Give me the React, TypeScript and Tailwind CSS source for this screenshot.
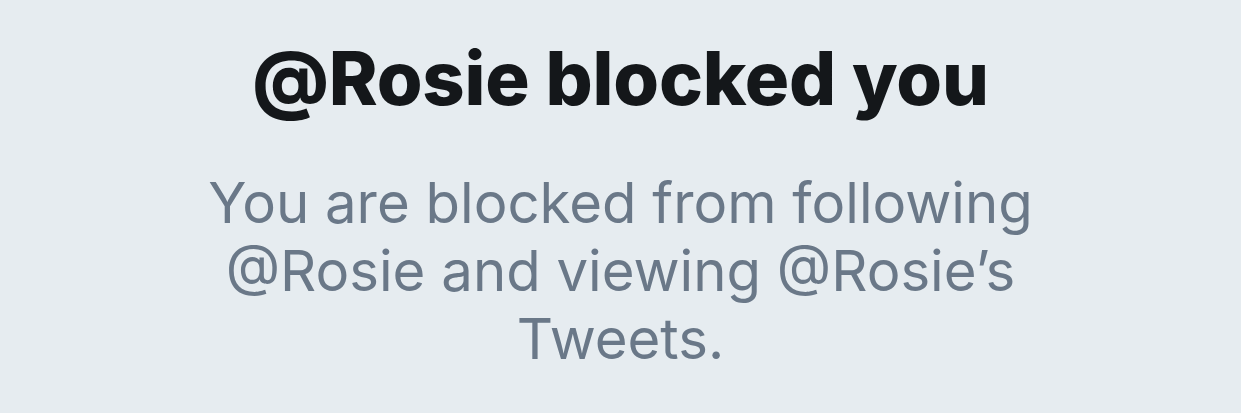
export default function App() {
  return (
    <div className="w-[1241px] h-[413px] bg-[#e6ecf0] flex flex-col items-center text-center" style={{ fontFamily: "Inter, 'Noto Sans', sans-serif" }}>
      <h1 className="mt-[30px] text-[74px] leading-[96px] font-extrabold text-[#14171a] tracking-[-0.2px]">@Rosie blocked you</h1>
      <p className="mt-[43px] text-[56.3px] leading-[68px] text-[#6a7888]">
        You are blocked from following<br />@Rosie and viewing @Rosie’s<br />Tweets.
      </p>
    </div>
  );
}
